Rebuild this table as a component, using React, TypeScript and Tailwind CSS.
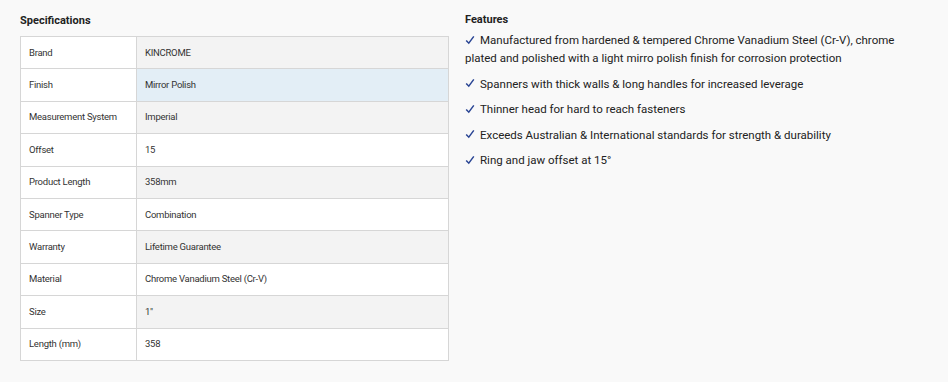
const SPECS: [string, string][] = [
  ["Brand", "KINCROME"],
  ["Finish", "Mirror Polish"],
  ["Measurement System", "Imperial"],
  ["Offset", "15"],
  ["Product Length", "358mm"],
  ["Spanner Type", "Combination"],
  ["Warranty", "Lifetime Guarantee"],
  ["Material", "Chrome Vanadium Steel (Cr-V)"],
  ["Size", "1\""],
  ["Length (mm)", "358"],
];

const FEATURES = [
  "Manufactured from hardened & tempered Chrome Vanadium Steel (Cr-V), chrome plated and polished with a light mirro polish finish for corrosion protection",
  "Spanners with thick walls & long handles for increased leverage",
  "Thinner head for hard to reach fasteners",
  "Exceeds Australian & International standards for strength & durability",
  "Ring and jaw offset at 15°",
];

function Check() {
  return (
    <svg width="10" height="10" viewBox="0 0 10 10" className="inline-block mr-[5px] -mt-[2px] align-middle">
      <polyline points="1.2,5.4 3.8,8.2 8.8,1.4" fill="none" stroke="#2a4594" strokeWidth="1.5" />
    </svg>
  );
}

export default function App() {
  return (
    <div
      className="flex h-[382px] w-[948px] bg-[#f9f9f9] text-[#222]"
      style={{ fontFamily: "Roboto, 'Liberation Sans', sans-serif" }}
    >
      <section className="w-[429px] ml-5 pt-[14px]">
        <h2 className="text-[11px] font-bold leading-[14px] mb-[8px]">Specifications</h2>
        <table className="w-full border-collapse text-[9.5px] tracking-[-0.25px] text-[#333]">
          <tbody>
            {SPECS.map(([label, value], i) => (
              <tr key={label} className="h-[32.4px]">
                <td className="w-[116px] border border-[#d6d6d6] bg-white px-2">{label}</td>
                <td
                  className={
                    "border border-[#d6d6d6] px-2 " +
                    (i === 1 ? "bg-[#e3eef6]" : i % 2 === 0 ? "bg-[#f3f3f3]" : "bg-white")
                  }
                >
                  {value}
                </td>
              </tr>
            ))}
          </tbody>
        </table>
      </section>

      <section className="ml-4 w-[450px] pt-[13px]">
        <h2 className="text-[11px] font-bold leading-[14px] mb-[4px]">Features</h2>
        <ul className="text-[11.5px] leading-[18px] flex flex-col gap-[7.5px]">
          {FEATURES.map((f) => (
            <li key={f}>
              <Check />
              {f}
            </li>
          ))}
        </ul>
      </section>
    </div>
  );
}
